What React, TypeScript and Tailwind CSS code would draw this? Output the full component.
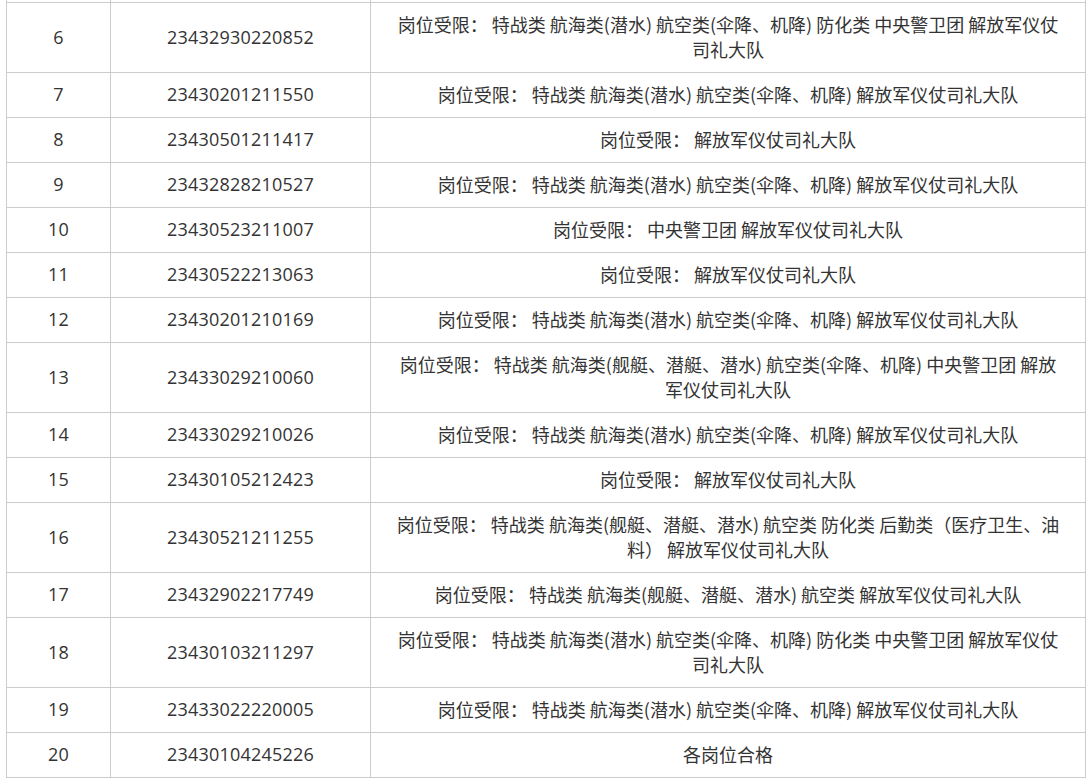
type Row = { no: number; id: string; lines: string[] };

const rows: Row[] = [
  {
    no: 6,
    id: "23432930220852",
    lines: [
      "岗位受限： 特战类 航海类(潜水) 航空类(伞降、机降) 防化类 中央警卫团 解放军仪仗",
      "司礼大队",
    ],
  },
  { no: 7, id: "23430201211550", lines: ["岗位受限： 特战类 航海类(潜水) 航空类(伞降、机降) 解放军仪仗司礼大队"] },
  { no: 8, id: "23430501211417", lines: ["岗位受限： 解放军仪仗司礼大队"] },
  { no: 9, id: "23432828210527", lines: ["岗位受限： 特战类 航海类(潜水) 航空类(伞降、机降) 解放军仪仗司礼大队"] },
  { no: 10, id: "23430523211007", lines: ["岗位受限： 中央警卫团 解放军仪仗司礼大队"] },
  { no: 11, id: "23430522213063", lines: ["岗位受限： 解放军仪仗司礼大队"] },
  { no: 12, id: "23430201210169", lines: ["岗位受限： 特战类 航海类(潜水) 航空类(伞降、机降) 解放军仪仗司礼大队"] },
  {
    no: 13,
    id: "23433029210060",
    lines: [
      "岗位受限： 特战类 航海类(舰艇、潜艇、潜水) 航空类(伞降、机降) 中央警卫团 解放",
      "军仪仗司礼大队",
    ],
  },
  { no: 14, id: "23433029210026", lines: ["岗位受限： 特战类 航海类(潜水) 航空类(伞降、机降) 解放军仪仗司礼大队"] },
  { no: 15, id: "23430105212423", lines: ["岗位受限： 解放军仪仗司礼大队"] },
  {
    no: 16,
    id: "23430521211255",
    lines: [
      "岗位受限： 特战类 航海类(舰艇、潜艇、潜水) 航空类 防化类 后勤类（医疗卫生、油",
      "料） 解放军仪仗司礼大队",
    ],
  },
  { no: 17, id: "23432902217749", lines: ["岗位受限： 特战类 航海类(舰艇、潜艇、潜水) 航空类 解放军仪仗司礼大队"] },
  {
    no: 18,
    id: "23430103211297",
    lines: [
      "岗位受限： 特战类 航海类(潜水) 航空类(伞降、机降) 防化类 中央警卫团 解放军仪仗",
      "司礼大队",
    ],
  },
  { no: 19, id: "23433022220005", lines: ["岗位受限： 特战类 航海类(潜水) 航空类(伞降、机降) 解放军仪仗司礼大队"] },
  { no: 20, id: "23430104245226", lines: ["各岗位合格"] },
];

const cell = "border border-[#cccccc] py-0 px-[10px] text-center align-middle";
// digits in the reference are wider than Noto CJK's
const num = "font-['Open_Sans','Noto_Sans_CJK_SC',sans-serif] tracking-[0.2px]";

export default function App() {
  return (
    <div className="min-h-screen bg-white font-['Noto_Sans_CJK_SC',sans-serif] text-[18px] leading-[25px] text-[#333333]">
      <table className="ml-[6px] w-[1079px] table-fixed border-collapse">
        <colgroup>
          <col className="w-[104px]" />
          <col className="w-[260px]" />
          <col className="w-[715px]" />
        </colgroup>
        <tbody>
          {/* tail of the previous row, scrolled out of view */}
          <tr className="h-[2px]">
            <td className="border-x border-[#cccccc] p-0" />
            <td className="border-x border-[#cccccc] p-0" />
            <td className="border-x border-[#cccccc] p-0" />
          </tr>
          {rows.map((row) => (
            <tr key={row.no} className={row.lines.length > 1 ? "h-[70px]" : "h-[45px]"}>
              <td className={`${cell} ${num}`}>{row.no}</td>
              <td className={`${cell} ${num}`}>{row.id}</td>
              <td className={`${cell} whitespace-nowrap`}>
                {row.lines.map((line, i) => (
                  <div key={i}>{line}</div>
                ))}
              </td>
            </tr>
          ))}
        </tbody>
      </table>
    </div>
  );
}
